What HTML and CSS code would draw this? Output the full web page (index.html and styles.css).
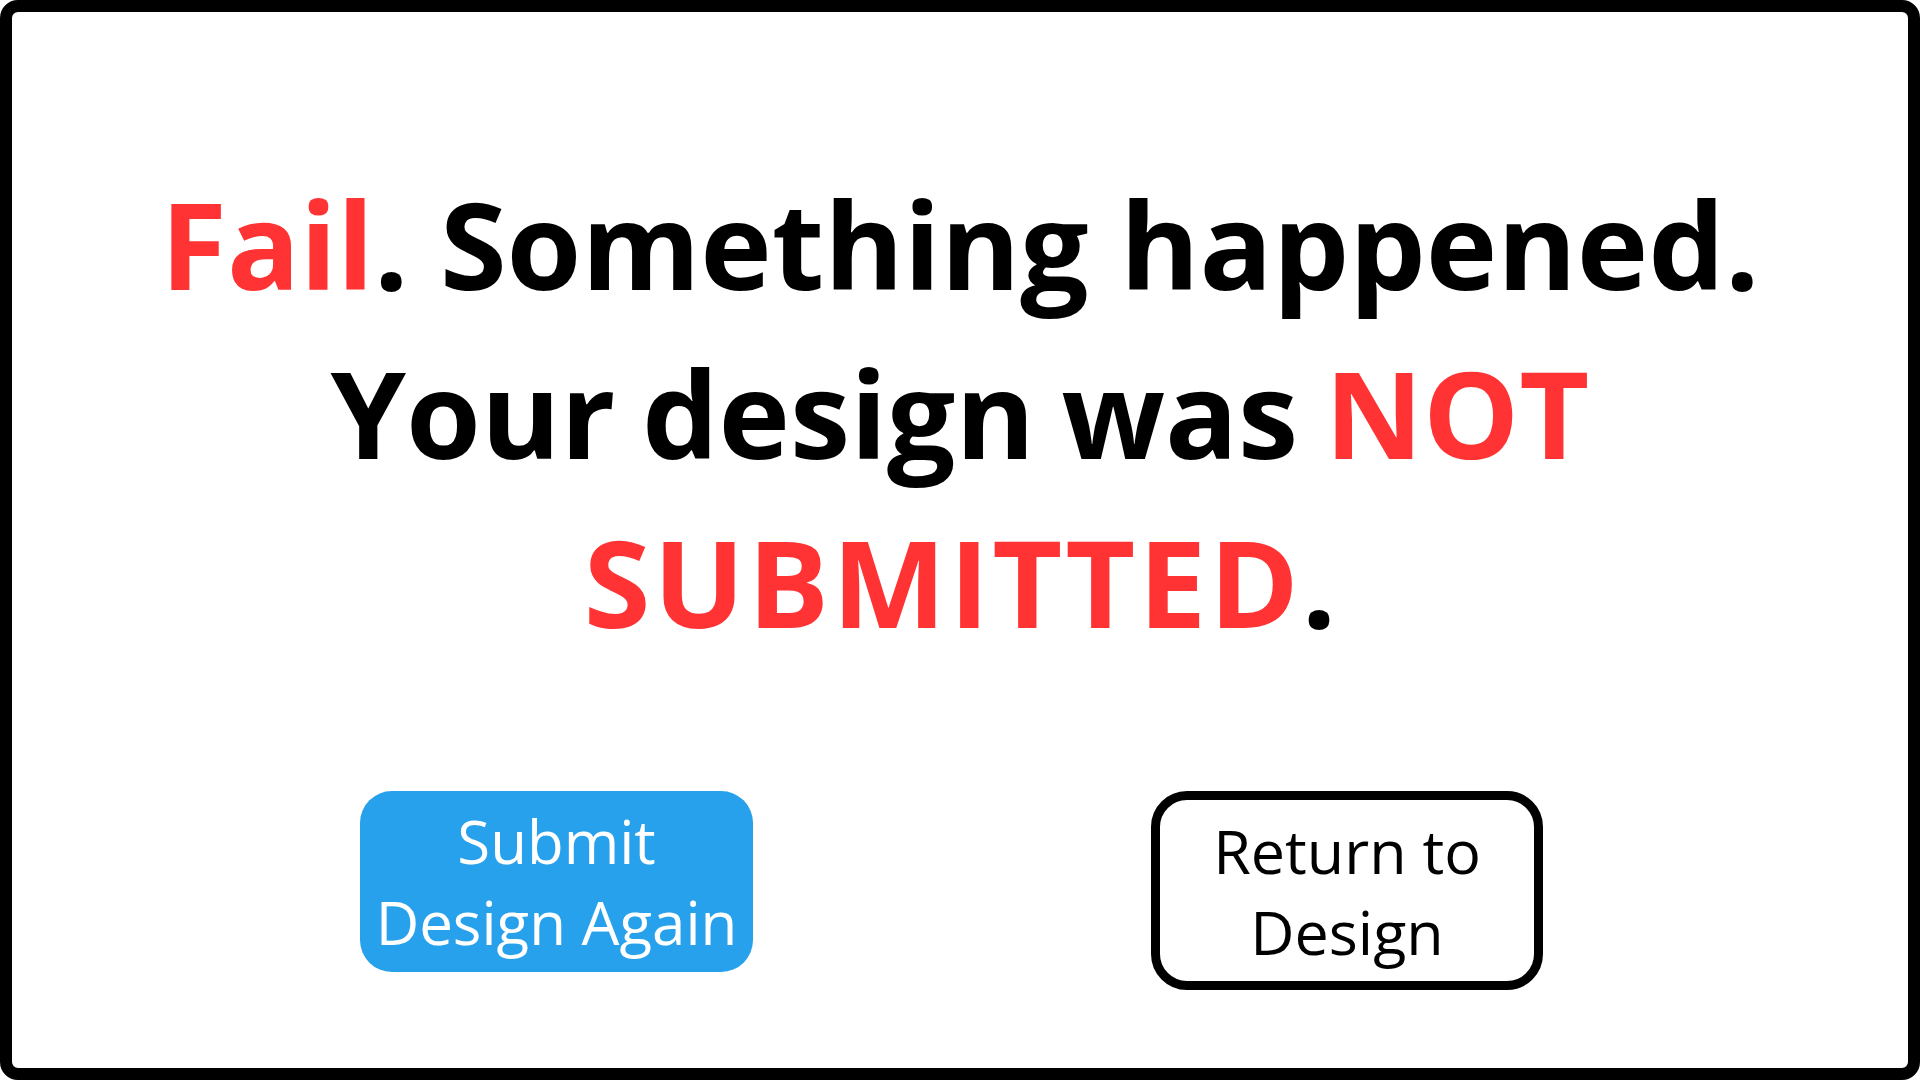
FILE: index.html
```html
<!DOCTYPE html>
<html lang="en">
<head>
<meta charset="utf-8">
<title>Submission failed</title>
<link rel="stylesheet" href="styles.css">
</head>
<body>
<main class="frame">
  <h1 class="headline">
    <span class="line"><span class="red">Fail</span>. Something happened.</span>
    <span class="line tight">Your design was <span class="red">NOT</span></span>
    <span class="line"><span class="red wide">SUBMITTED</span>.</span>
  </h1>
  <div class="actions">
    <button class="btn btn-primary" type="button">Submit<br>Design Again</button>
    <button class="btn btn-outline" type="button">Return to<br>Design</button>
  </div>
</main>
</body>
</html>
```

FILE: styles.css
```css
html, body {
  margin: 0;
  padding: 0;
  background: #ffffff;
}

body {
  width: 1920px;
  height: 1080px;
  overflow: hidden;
  font-family: "Open Sans", "Noto Sans", "Liberation Sans", sans-serif;
}

.frame {
  box-sizing: border-box;
  width: 1920px;
  height: 1080px;
  border: 12px solid #000000;
  border-radius: 18px;
  display: flex;
  flex-direction: column;
  align-items: stretch;
}

.headline {
  margin: 0;
  padding-top: 147px;
  display: flex;
  flex-direction: column;
  align-items: center;
  font-weight: 700;
  font-size: 121px;
  line-height: 169px;
  color: #000000;
  letter-spacing: 0;
}

.line {
  display: block;
  white-space: nowrap;
}

.tight {
  word-spacing: -5px;
}

.red {
  color: #ff3333;
}

.wide {
  letter-spacing: 3px;
}

.actions {
  display: flex;
  align-items: flex-start;
  padding-left: 348px;
  gap: 398px;
  margin-top: 125px;
}

.btn {
  box-sizing: border-box;
  margin: 0;
  display: flex;
  align-items: center;
  justify-content: center;
  text-align: center;
  font-family: "Open Sans", "Noto Sans", "Liberation Sans", sans-serif;
  font-weight: 400;
  cursor: pointer;
}

.btn-primary {
  width: 393px;
  height: 181px;
  border: none;
  border-radius: 32px;
  background: #28a1ec;
  color: #ffffff;
  font-size: 60px;
  line-height: 81px;
}

.btn-outline {
  width: 392px;
  height: 199px;
  border: 9px solid #000000;
  border-radius: 36px;
  background: #ffffff;
  color: #000000;
  font-size: 61px;
  line-height: 81px;
}
```
